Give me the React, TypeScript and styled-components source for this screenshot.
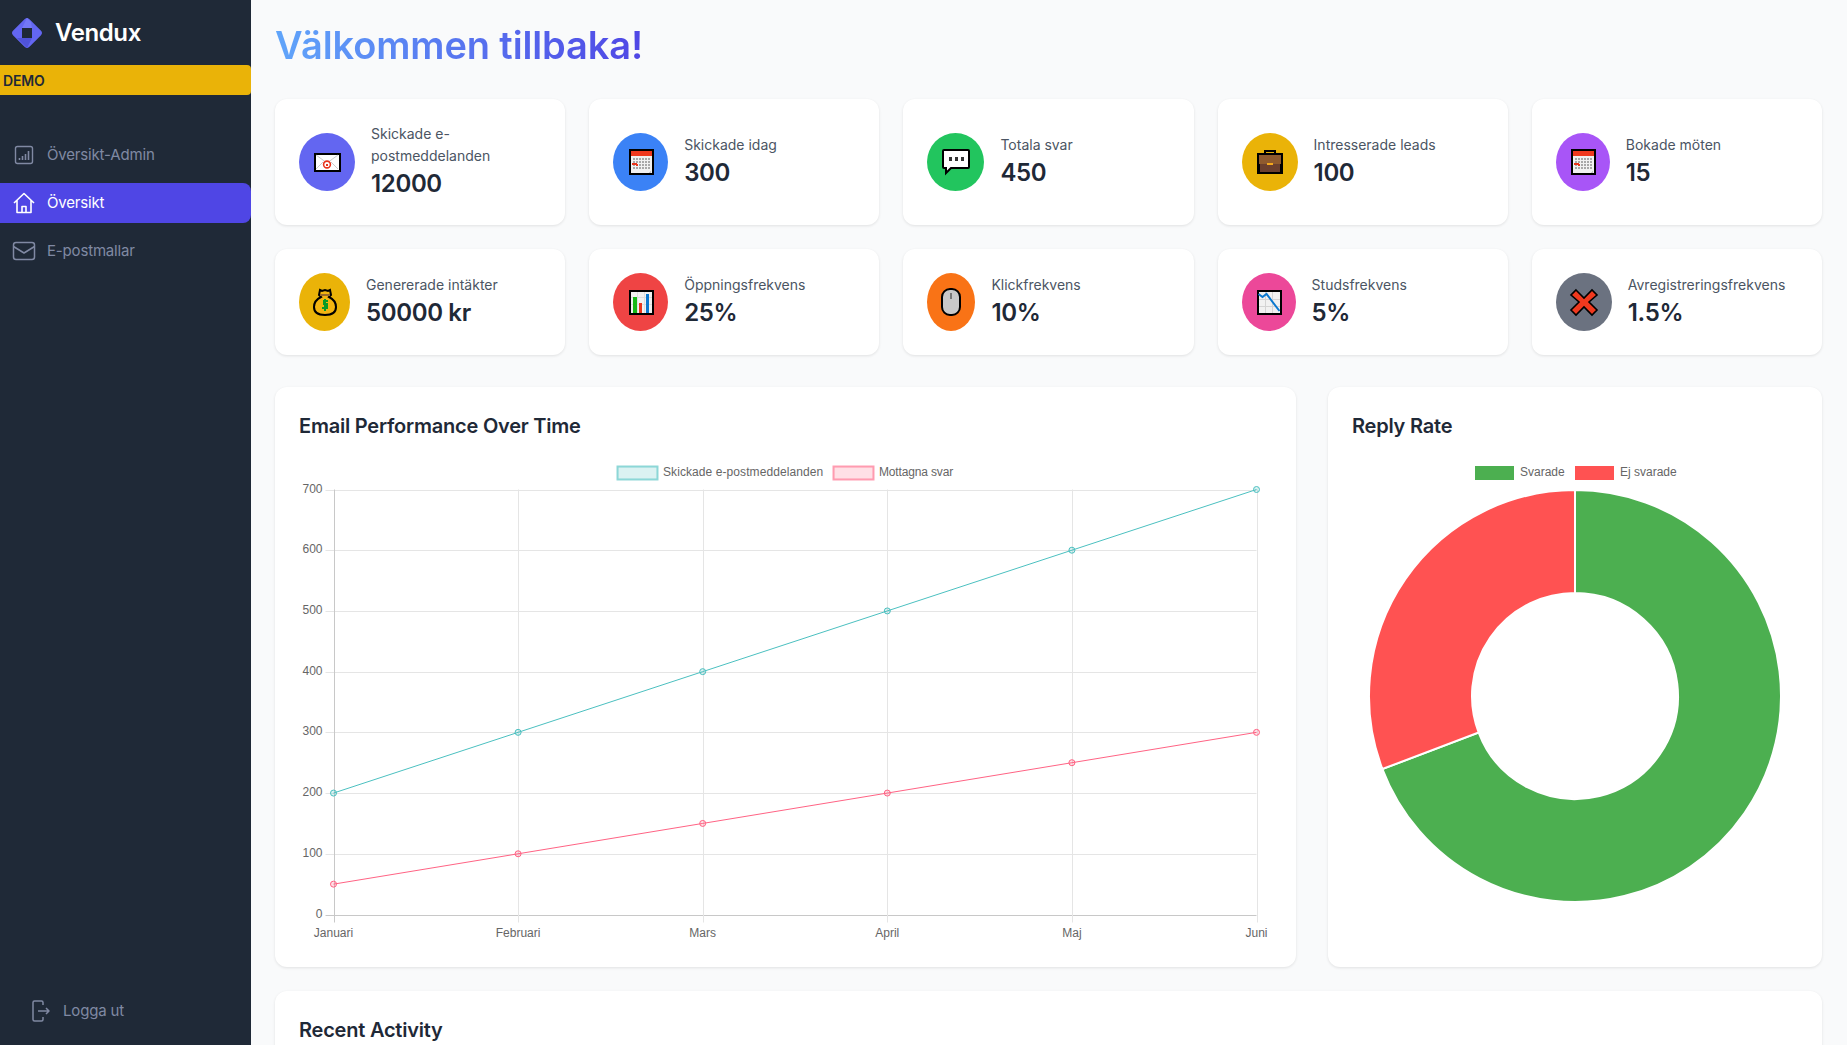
import React from 'react';
import styled, { createGlobalStyle } from 'styled-components';

const GlobalStyle = createGlobalStyle`
  html, body { margin: 0; padding: 0; height: 100%; overflow: hidden; }
  body { background: #f9fafb; font-family: Inter, "Noto Sans", sans-serif; color: #1f2937; }
  #root { height: 100%; }
  * { box-sizing: border-box; }
`;

/* pixel style icons, all drawn on a 32x32 grid */
const PixelSvg: React.FC<{ children: React.ReactNode }> = ({ children }) => (
  <svg width="32" height="32" viewBox="0 0 32 32" shapeRendering="crispEdges">
    {children}
  </svg>
);

const MailIcon = () => (
  <PixelSvg>
    <rect x="2.5" y="6.5" width="27" height="19" fill="#000" />
    <rect x="4.5" y="8.5" width="23" height="15" fill="#fff" />
    <path d="M5 9l11 8 11-8M5 23l7-7M27 23l-7-7" fill="none" stroke="#ccc" strokeWidth="1" shapeRendering="auto" />
    <circle cx="16" cy="18.5" r="3.4" fill="#fff" stroke="#e8341c" strokeWidth="1.6" shapeRendering="auto" />
    <rect x="15" y="17.5" width="2" height="2" fill="#e8341c" />
  </PixelSvg>
);

const CalendarIcon = () => (
  <PixelSvg>
    <rect x="3.5" y="3" width="25" height="26" fill="#000" />
    <rect x="5.5" y="5" width="21" height="5" fill="#f0391e" />
    <rect x="5.5" y="10" width="21" height="17" fill="#f1f1f1" />
    {[0, 1, 2, 3].map((row) =>
      [0, 1, 2, 3, 4, 5].map((col) => (
        <rect key={`${row}-${col}`} x={8 + col * 3} y={12 + row * 3} width="2" height="2" fill="#a8a8a8" />
      ))
    )}
    <rect x="7" y="17" width="5" height="2" fill="#e8341c" />
    <rect x="11" y="18" width="2" height="2" fill="#e8341c" />
    <path d="M26 24v3h-3z" fill="#c8c8c8" />
  </PixelSvg>
);

const ChatIcon = () => (
  <PixelSvg>
    <path d="M5 4h23a1 1 0 0 1 1 1v16a1 1 0 0 1-1 1H11l-5 5v-5H4a1 1 0 0 1-1-1V5a1 1 0 0 1 1-1z" fill="#fff" stroke="#000" strokeWidth="2" shapeRendering="auto" />
    <rect x="9" y="11" width="3" height="4" fill="#333" />
    <rect x="15" y="11" width="3" height="4" fill="#333" />
    <rect x="21" y="11" width="3" height="4" fill="#333" />
  </PixelSvg>
);

const BriefcaseIcon = () => (
  <PixelSvg>
    <path d="M11 8V5h10v3" fill="none" stroke="#000" strokeWidth="2" />
    <rect x="3" y="7" width="26" height="21" rx="1.5" fill="#000" />
    <rect x="5" y="9" width="22" height="9" fill="#8f5a2e" />
    <rect x="6" y="18" width="20" height="8" fill="#6b3f2e" />
    <rect x="13" y="17" width="6" height="2" fill="#f5a81c" />
  </PixelSvg>
);

const BagIcon = () => (
  <PixelSvg>
    <path d="M11 4l2 1 3-1 3 1 2-1 1 5-2 2c4 2 7 6 7 10 0 5-4 8-11 8s-11-3-11-8c0-4 3-8 7-10l-2-2z" fill="#f3b511" stroke="#000" strokeWidth="2" shapeRendering="auto" />
    <rect x="11" y="8" width="10" height="2" fill="#9a6a2b" />
    <path d="M19 15h-4v3h3v4h-5M16 13v12" fill="none" stroke="#0a9a28" strokeWidth="2" />
  </PixelSvg>
);

const BarsIcon = () => (
  <PixelSvg>
    <rect x="3.5" y="3.5" width="25" height="25" fill="#000" />
    <rect x="5.5" y="5.5" width="21" height="21" fill="#f1f1f1" />
    <path d="M5.5 11.5h21M5.5 18.5h21M12.5 5.5v21M19.5 5.5v21" stroke="#ddd" strokeWidth="1" />
    <rect x="8" y="11" width="4" height="16" fill="#16b816" />
    <rect x="14" y="17" width="3" height="10" fill="#e8341c" />
    <rect x="21" y="8" width="3" height="19" fill="#0a78d0" />
  </PixelSvg>
);

const MouseIcon = () => (
  <PixelSvg>
    <rect x="7" y="3" width="18" height="26" rx="8" fill="#c8c8c8" stroke="#000" strokeWidth="2" shapeRendering="auto" />
    <rect x="15" y="7" width="2" height="6" fill="#777" />
  </PixelSvg>
);

const BounceIcon = () => (
  <PixelSvg>
    <rect x="3.5" y="4" width="25" height="25" fill="#000" />
    <rect x="5.5" y="6" width="21" height="21" fill="#f1f1f1" />
    <path d="M5.5 13.5h21M5.5 20.5h21M12.5 6v21M19.5 6v21" stroke="#d4d4d4" strokeWidth="1" />
    <path d="M5.5 8l4 3 4-3 13 17" fill="none" stroke="#0a78d0" strokeWidth="2" shapeRendering="auto" />
  </PixelSvg>
);

const CrossIcon = () => (
  <PixelSvg>
    <path d="M8 4l8 8 8-8 5 5-8 7 8 8-5 5-8-8-8 8-5-5 8-8-8-7z" fill="#f0391e" stroke="#000" strokeWidth="1.6" shapeRendering="auto" />
  </PixelSvg>
);

const statsTop = [
  { label: 'Skickade e-postmeddelanden', value: '12000', color: '#6366f1', width: 56, icon: <MailIcon /> },
  { label: 'Skickade idag', value: '300', color: '#3b82f6', width: 55, icon: <CalendarIcon /> },
  { label: 'Totala svar', value: '450', color: '#22c55e', width: 57, icon: <ChatIcon /> },
  { label: 'Intresserade leads', value: '100', color: '#eab308', width: 56, icon: <BriefcaseIcon /> },
  { label: 'Bokade möten', value: '15', color: '#a855f7', width: 54, icon: <CalendarIcon /> },
];

const statsBottom = [
  { label: 'Genererade intäkter', value: '50000 kr', color: '#eab308', width: 51, icon: <BagIcon /> },
  { label: 'Öppningsfrekvens', value: '25%', color: '#ef4444', width: 55, icon: <BarsIcon /> },
  { label: 'Klickfrekvens', value: '10%', color: '#f97316', width: 48, icon: <MouseIcon /> },
  { label: 'Studsfrekvens', value: '5%', color: '#ec4899', width: 54, icon: <BounceIcon /> },
  { label: 'Avregistreringsfrekvens', value: '1.5%', color: '#6b7280', width: 56, icon: <CrossIcon /> },
];

const months = ['Januari', 'Februari', 'Mars', 'April', 'Maj', 'Juni'];
const sent = [200, 300, 400, 500, 600, 700];
const replies = [50, 100, 150, 200, 250, 300];
const ticks = [0, 100, 200, 300, 400, 500, 600, 700];

const plotLeft = 34.5;
const plotRight = 957.5;
const plotTop = 34.5;
const plotBottom = 459.5;
const xAt = (i: number) => plotLeft + ((plotRight - plotLeft) / 5) * i;
const yAt = (v: number) => plotBottom - ((plotBottom - plotTop) / 700) * v;

const Series: React.FC<{ data: number[]; color: string; fill: string }> = ({ data, color, fill }) => (
  <g>
    <polyline points={data.map((v, i) => `${xAt(i)},${yAt(v)}`).join(' ')} fill="none" stroke={color} strokeWidth="1" />
    {data.map((v, i) => (
      <circle key={i} cx={xAt(i)} cy={yAt(v)} r="3" fill={fill} stroke={color} strokeWidth="1" />
    ))}
  </g>
);

const LineChart = () => (
  <svg width="973" height="488" viewBox="0 0 973 488" fontFamily="'Liberation Sans', Arial, sans-serif" fontSize="12" fill="#666">
    <rect x="318.5" y="11.5" width="40" height="13" fill="rgba(75,192,192,0.2)" stroke="rgba(75,192,192,0.6)" strokeWidth="2" />
    <text x="364" y="21" letterSpacing="0.08">Skickade e-postmeddelanden</text>
    <rect x="534.5" y="11.5" width="40" height="13" fill="rgba(255,99,132,0.2)" stroke="rgba(255,99,132,0.6)" strokeWidth="2" />
    <text x="580" y="21" letterSpacing="-0.15">Mottagna svar</text>

    {ticks.map((t) => (
      <g key={t}>
        <line x1={plotLeft - 8} x2={plotRight} y1={Math.round(yAt(t)) + 0.5} y2={Math.round(yAt(t)) + 0.5} stroke={t === 0 ? '#c8c8c8' : '#e5e5e5'} />
        <text x={plotLeft - 11} y={Math.round(yAt(t)) + 3} textAnchor="end">{t}</text>
      </g>
    ))}
    {months.map((m, i) => (
      <g key={m}>
        <line x1={Math.round(xAt(i)) + 0.5} x2={Math.round(xAt(i)) + 0.5} y1={plotTop} y2={plotBottom + 8} stroke={i === 0 ? '#c8c8c8' : '#e5e5e5'} />
        <text x={xAt(i)} y={plotBottom + 22} textAnchor="middle">{m}</text>
      </g>
    ))}
    <Series data={sent} color="#4bc0c0" fill="rgba(75,192,192,0.2)" />
    <Series data={replies} color="#ff6384" fill="rgba(255,99,132,0.2)" />
  </svg>
);

const donutPath = (from: number, to: number) => {
  const cx = 223;
  const cy = 241;
  const outer = 206;
  const inner = 103;
  const pt = (r: number, a: number) => {
    const rad = ((a - 90) * Math.PI) / 180;
    return `${cx + r * Math.cos(rad)} ${cy + r * Math.sin(rad)}`;
  };
  const large = to - from > 180 ? 1 : 0;
  return `M${pt(outer, from)}A${outer} ${outer} 0 ${large} 1 ${pt(outer, to)}L${pt(inner, to)}A${inner} ${inner} 0 ${large} 0 ${pt(inner, from)}Z`;
};

const answeredAngle = (450 / 650) * 360;

const DonutChart = () => (
  <svg width="446" height="488" viewBox="0 0 446 488" fontFamily="'Liberation Sans', Arial, sans-serif" fontSize="12" fill="#666">
    <rect x="123" y="11" width="39" height="14" fill="#4caf50" />
    <text x="168" y="21">Svarade</text>
    <rect x="223" y="11" width="39" height="14" fill="#ff5252" />
    <text x="268" y="21">Ej svarade</text>
    <path d={donutPath(0, answeredAngle)} fill="#4caf50" stroke="#fff" strokeWidth="2" />
    <path d={donutPath(answeredAngle, 360)} fill="#ff5252" stroke="#fff" strokeWidth="2" />
  </svg>
);

export default function App() {
  return (
    <Layout>
      <GlobalStyle />
      <Sidebar>
        <Brand>
          <svg width="30" height="30" viewBox="0 0 30 30">
            <rect x="3.5" y="3.5" width="23" height="23" rx="3.5" transform="rotate(45 15 15)" fill="#6366f1" />
            <path d="M15 15L10 10 15 0 19 4 20 10z" fill="#7478f5" />
            <path d="M15 15l5 5-5 10-10-10 5 0z" fill="#5053d8" />
            <rect x="10" y="10" width="10" height="10" fill="#1f2937" />
          </svg>
          <BrandName>Vendux</BrandName>
        </Brand>
        <DemoBanner>DEMO</DemoBanner>
        <Nav>
          <NavItem>
            <svg width="24" height="24" viewBox="0 0 24 24" fill="none" stroke="currentColor" strokeWidth="1.4">
              <rect x="3.5" y="3.5" width="17" height="17" rx="2" />
              <path d="M7.5 17v-2M10.5 17v-4M13.5 17v-6M16.5 17V8" strokeWidth="1.6" />
            </svg>
            <NavText>Översikt-Admin</NavText>
          </NavItem>
          <NavItem $active>
            <svg width="24" height="24" viewBox="0 0 24 24" fill="none" stroke="currentColor" strokeWidth="1.6" strokeLinejoin="round">
              <path d="M2 12L12 2.5 22 12M5 9.5V21.5h14V9.5" />
              <path d="M10 21.5v-6h4v6" />
            </svg>
            <NavText>Översikt</NavText>
          </NavItem>
          <NavItem>
            <svg width="24" height="24" viewBox="0 0 24 24" fill="none" stroke="currentColor" strokeWidth="1.5" strokeLinejoin="round">
              <rect x="1.5" y="3.5" width="21" height="17" rx="2.5" />
              <path d="M1.5 7.5L12 14l10.5-6.5" />
            </svg>
            <NavText>E-postmallar</NavText>
          </NavItem>
        </Nav>
        <LogoutRow>
          <svg width="24" height="24" viewBox="0 0 24 24" fill="none" stroke="currentColor" strokeWidth="1.5" strokeLinejoin="round">
            <path d="M15 6V3.5a1.5 1.5 0 0 0-1.5-1.5h-7A1.5 1.5 0 0 0 5 3.5v17A1.5 1.5 0 0 0 6.5 22h7a1.5 1.5 0 0 0 1.5-1.5V18" />
            <path d="M10 12h11M18 9l3 3-3 3" />
          </svg>
          <NavText>Logga ut</NavText>
        </LogoutRow>
      </Sidebar>

      <Main>
        <Title>Välkommen tillbaka!</Title>
        <StatsGrid>
          {[...statsTop, ...statsBottom].map((stat) => (
            <StatCard key={stat.label}>
              <StatIcon $color={stat.color} $width={stat.width}>{stat.icon}</StatIcon>
              <div>
                <StatLabel>{stat.label}</StatLabel>
                <StatValue>{stat.value}</StatValue>
              </div>
            </StatCard>
          ))}
        </StatsGrid>
        <ChartsRow>
          <Panel>
            <PanelTitle>Email Performance Over Time</PanelTitle>
            <LineChart />
          </Panel>
          <Panel>
            <PanelTitle>Reply Rate</PanelTitle>
            <DonutChart />
          </Panel>
        </ChartsRow>
        <Panel>
          <PanelTitle>Recent Activity</PanelTitle>
        </Panel>
      </Main>
    </Layout>
  );
}

const Layout = styled.div`
  display: flex;
  height: 1045px;
  overflow: hidden;
`;

const Sidebar = styled.aside`
  display: flex;
  flex-direction: column;
  flex: 0 0 251px;
  height: 100%;
  background: #1f2937;
`;

const Brand = styled.div`
  display: flex;
  align-items: center;
  gap: 13px;
  height: 65px;
  padding-left: 12px;
`;

const BrandName = styled.span`
  color: #fff;
  font-size: 24px;
  font-weight: 600;
  letter-spacing: -0.4px;
`;

const DemoBanner = styled.div`
  display: flex;
  align-items: center;
  height: 30px;
  padding-left: 3px;
  background: #eab308;
  border-radius: 0 4px 4px 0;
  color: #1f2937;
  font-size: 14px;
  font-weight: 600;
  letter-spacing: -0.2px;
`;

const Nav = styled.nav`
  display: flex;
  flex-direction: column;
  gap: 8px;
  margin-top: 40px;
`;

const NavItem = styled.a<{ $active?: boolean }>`
  display: flex;
  align-items: center;
  gap: 11px;
  height: 40px;
  padding-left: 12px;
  border-radius: 0 8px 8px 0;
  background: ${({ $active }) => ($active ? '#4f46e5' : 'transparent')};
  color: ${({ $active }) => ($active ? '#fff' : '#8089a3')};
`;

const NavText = styled.span`
  padding-bottom: 2px;
  font-size: 15px;
  letter-spacing: -0.17px;
`;

const LogoutRow = styled.a`
  display: flex;
  align-items: center;
  gap: 11px;
  height: 40px;
  margin-top: auto;
  margin-bottom: 14px;
  padding-left: 28px;
  color: #8089a3;
`;

const Main = styled.main`
  flex: 1;
  min-width: 0;
  padding: 24px 25px 24px 24px;
`;

const Title = styled.h1`
  width: max-content;
  margin: 0 0 33px;
  font-size: 38px;
  font-weight: 600;
  line-height: 42px;
  letter-spacing: -0.12px;
  background: linear-gradient(90deg, #60a5fa, #4f46e5);
  -webkit-background-clip: text;
  background-clip: text;
  color: transparent;
`;

const StatsGrid = styled.div`
  display: grid;
  grid-template-columns: repeat(5, minmax(0, 1fr));
  gap: 24px;
  margin-bottom: 32px;
`;

const StatCard = styled.div`
  display: flex;
  align-items: center;
  gap: 16px;
  padding: 24px;
  background: #fff;
  border-radius: 12px;
  box-shadow: 0 1px 3px rgba(0, 0, 0, 0.1);
`;

const StatIcon = styled.div<{ $color: string; $width: number }>`
  display: flex;
  align-items: center;
  justify-content: center;
  flex: 0 0 ${({ $width }) => $width}px;
  height: 58px;
  border-radius: 50%;
  background: ${({ $color }) => $color};
`;

const StatLabel = styled.p`
  margin: 0;
  color: #4b5563;
  font-size: 14px;
  line-height: 22px;
`;

const StatValue = styled.p`
  margin: 0;
  color: #1f2937;
  font-size: 24px;
  font-weight: 600;
  line-height: 34px;
  letter-spacing: -0.35px;
`;

const ChartsRow = styled.div`
  display: grid;
  grid-template-columns: 1021px 1fr;
  gap: 32px;
  margin-bottom: 24px;
`;

const Panel = styled.section`
  height: 580px;
  padding: 25px 24px 24px;
  background: #fff;
  border-radius: 12px;
  box-shadow: 0 1px 3px rgba(0, 0, 0, 0.1);
`;

const PanelTitle = styled.h2`
  margin: 0 0 15px;
  color: #1f2937;
  font-size: 20px;
  font-weight: 600;
  line-height: 28px;
  letter-spacing: -0.22px;
`;
